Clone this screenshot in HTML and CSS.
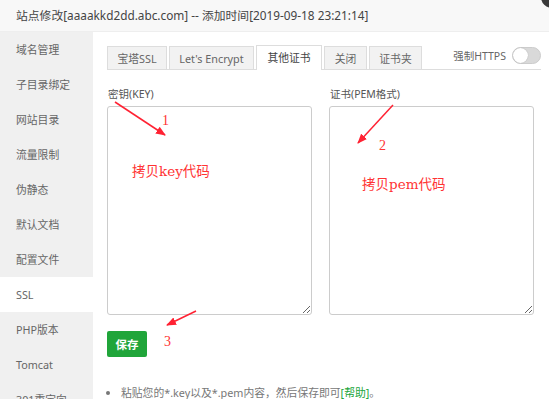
FILE: index.html
```html
<!DOCTYPE html>
<html lang="zh-CN">
<head>
    <meta charset="UTF-8">
    <title>站点修改</title>
    <link rel="stylesheet" href="styles.css">
</head>
<body>

    <div class="title">站点修改[aaaakkd2dd.abc.com] -- 添加时间[2019-09-18 23:21:14]</div>
    <span class="close"></span>

    <div class="layout">
        <ul class="side">
            <li>域名管理</li>
            <li>子目录绑定</li>
            <li>网站目录</li>
            <li>流量限制</li>
            <li>伪静态</li>
            <li>默认文档</li>
            <li>配置文件</li>
            <li class="active">SSL</li>
            <li>PHP版本</li>
            <li>Tomcat</li>
            <li>301重定向</li>
        </ul>

        <div class="main">
            <div class="tabs">
                <span class="tab w1">宝塔SSL</span>
                <span class="tab w2">Let's Encrypt</span>
                <span class="tab w3 on">其他证书</span>
                <span class="tab w4">关闭</span>
                <span class="tab w5">证书夹</span>
                <div class="https">
                    <span>强制HTTPS</span>
                    <span class="toggle"><i></i></span>
                </div>
            </div>

            <div class="fields">
                <div class="field">
                    <label for="key">密钥(KEY)</label>
                    <textarea id="key"></textarea>
                </div>
                <div class="field">
                    <label for="csr">证书(PEM格式)</label>
                    <textarea id="csr"></textarea>
                </div>
            </div>

            <button class="save">保存</button>

            <ul class="note">
                <li>粘贴您的*.key以及*.pem内容，然后保存即可<a href="#">[帮助]</a>。</li>
            </ul>
        </div>
    </div>

    <!-- red hints drawn over the screenshot -->
    <svg class="marks" width="549" height="399" viewBox="0 0 549 399">
        <defs>
            <marker id="head" markerWidth="10" markerHeight="8" refX="9" refY="4" orient="auto" markerUnits="userSpaceOnUse">
                <path d="M0,0 L10,4 L0,8 Z" fill="#f23"/>
            </marker>
        </defs>
        <line x1="115" y1="102" x2="165" y2="135" stroke="#f23" stroke-width="1.5" marker-end="url(#head)"/>
        <line x1="393" y1="105" x2="358" y2="143" stroke="#f23" stroke-width="1.5" marker-end="url(#head)"/>
        <line x1="196" y1="311" x2="167" y2="325" stroke="#f23" stroke-width="1.5" marker-end="url(#head)"/>
        <text x="162" y="125" class="num">1</text>
        <text x="379" y="150" class="num">2</text>
        <text x="164" y="346" class="num">3</text>
        <text x="132" y="176" class="hint">拷贝key代码</text>
        <text x="362" y="189" class="hint">拷贝pem代码</text>
    </svg>

</body>
</html>
```
FILE: styles.css
```css
body {
    margin: 0;
    font-family: "Noto Sans", "Noto Sans CJK SC", sans-serif;
    background-color: #fff;
    width: 549px;
    height: 399px;
    overflow: hidden;
    position: relative;
}

.title {
    height: 31px;
    line-height: 31px;
    padding-left: 16px;
    background-color: #f8f8f8;
    border-bottom: 1px solid #eee;
    font-size: 11.8px;
    color: #444;
}

.close {
    position: absolute;
    top: -14px;
    right: -14px;
    width: 22px;
    height: 22px;
    border-radius: 50%;
    background-color: #3a3a3a;
}

.layout {
    display: flex;
    height: 367px;
}

.side {
    list-style: none;
    margin: 0;
    padding: 0;
    width: 93px;
    flex-shrink: 0;
    background-color: #f0f0f0;
}

.side li {
    height: 35px;
    line-height: 35px;
    padding-left: 16px;
    font-size: 10.8px;
    color: #666;
}

.side li.active {
    background-color: #fff;
}

.main {
    flex: 1;
    padding: 13px 8px 0 14px;
}

.tabs {
    display: flex;
    align-items: flex-end;
    gap: 2px;
    height: 24px;
    border-bottom: 1px solid #ddd;
}

.tab {
    height: 23px;
    line-height: 23px;
    text-align: center;
    font-size: 10.8px;
    color: #666;
    background-color: #f2f2f2;
    border: 1px solid #ddd;
    border-bottom: none;
    box-sizing: border-box;
}

.tab.on {
    background-color: #fff;
    height: 25px;
    margin-bottom: -1px;
    color: #444;
}

.w1 { width: 60px; }
.w2 { width: 85px; }
.w3 { width: 66px; }
.w4 { width: 43px; }
.w5 { width: 53px; }

.https {
    margin-left: auto;
    align-self: center;
    display: flex;
    align-items: center;
    gap: 6px;
    font-size: 10.5px;
    color: #666;
    margin-bottom: 4px;
}

.toggle {
    position: relative;
    width: 29px;
    height: 17px;
    border-radius: 9px;
    background-color: #d9d9d9;
    border: 1px solid #ccc;
    box-sizing: border-box;
}

.toggle i {
    position: absolute;
    left: 0;
    top: 0;
    width: 15px;
    height: 15px;
    border-radius: 50%;
    background-color: #fff;
    box-shadow: 0 0 1px rgba(0,0,0,0.3);
}

.fields {
    display: grid;
    grid-template-columns: 205px 205px;
    gap: 17px;
    margin-top: 17px;
}

.field label {
    display: block;
    font-size: 10.5px;
    color: #555;
    line-height: 14px;
    margin-bottom: 5px;
    padding-left: 1px;
}

.field textarea {
    display: block;
    width: 205px;
    height: 209px;
    box-sizing: border-box;
    border: 1px solid #ccc;
    border-radius: 3px;
}

.save {
    margin-top: 16px;
    width: 40px;
    height: 26px;
    padding: 0;
    border: none;
    border-radius: 2px;
    background-color: #20a53a;
    color: #fff;
    font-family: "Noto Sans CJK SC", sans-serif;
    font-size: 11.5px;
    font-weight: bold;
}

.note {
    margin: 27px 0 0;
    padding-left: 14px;
    font-size: 10.8px;
    color: #777;
}

.note a {
    color: #20a53a;
    text-decoration: none;
}

.marks {
    position: absolute;
    left: 0;
    top: 0;
    pointer-events: none;
}

.marks .num {
    font-family: "Liberation Serif", serif;
    font-size: 14px;
    fill: #f33;
}

.marks .hint {
    font-family: "DejaVu Serif", "Noto Sans CJK SC", serif;
    font-size: 13.5px;
    fill: #f33;
}
```
